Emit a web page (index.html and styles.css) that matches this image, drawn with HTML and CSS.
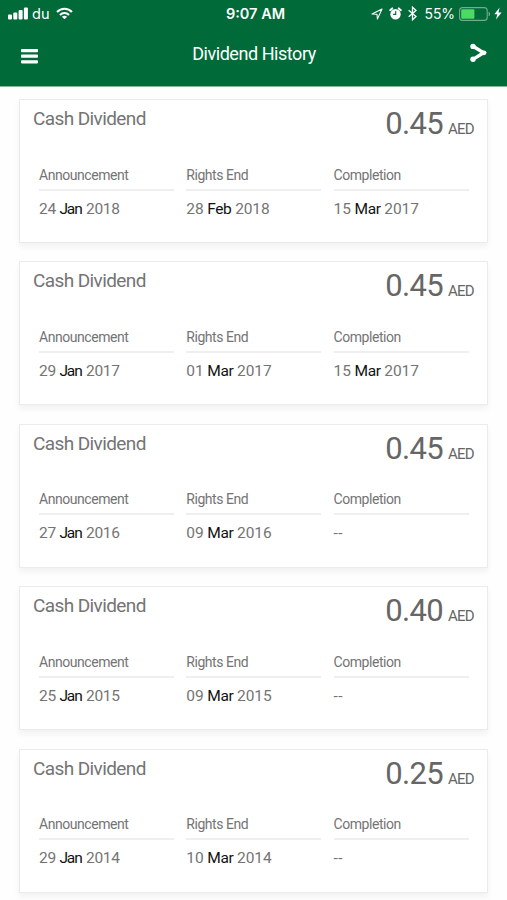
FILE: index.html
```
<!DOCTYPE html>
<html lang="en">
<head>
    <meta charset="UTF-8">
    <title>Dividend History</title>
    <link rel="stylesheet" href="styles.css">
</head>
<body>
<header class="header">
    <div class="status">
        <div class="status-left">
            <svg class="signal" width="20" height="13" viewBox="0 0 20 13" fill="#fff">
                <rect x="0" y="7.5" width="4" height="5" rx="1"/>
                <rect x="5.3" y="5.5" width="4" height="7" rx="1"/>
                <rect x="10.6" y="3" width="4" height="9.5" rx="1"/>
                <rect x="15.9" y="0.5" width="4" height="12" rx="1"/>
            </svg>
            <span class="carrier">du</span>
            <svg class="wifi" width="17" height="13" viewBox="0 0 18 13" fill="none" stroke="#fff" stroke-width="2.2">
                <path d="M1.1 5C5.4 .4 12.6 .4 16.9 5"/>
                <path d="M4.2 8c2.7-2.8 6.9-2.8 9.6 0"/>
                <path d="M9 12.7 6.2 9.9c1.6-1.5 4-1.5 5.6 0z" fill="#fff" stroke="none"/>
            </svg>
        </div>
        <div class="time">9:07 AM</div>
        <div class="status-right">
            <svg class="location" width="12" height="12" viewBox="0 0 12 12" fill="none" stroke="#fff" stroke-width="1.1" stroke-linejoin="round">
                <path d="M11 1 1 6l5 .2.4 4.8z"/>
            </svg>
            <svg class="alarm" width="13" height="13" viewBox="0 0 13 13">
                <circle cx="6.5" cy="7.2" r="5.2" fill="#fff"/>
                <path d="M1.2 3.2 3.2 1.4M11.8 3.2 9.8 1.4" stroke="#fff" stroke-width="2" stroke-linecap="round"/>
                <path d="M6.7 4v3.4H4.2" fill="none" stroke="#006a38" stroke-width="1.1"/>
            </svg>
            <svg class="bluetooth" width="9" height="15" viewBox="0 0 9 15" fill="none" stroke="#fff" stroke-width="1.3">
                <path d="M.7 4.2 8 10.6 4.5 13.8V1.2L8 4.4.7 10.8"/>
            </svg>
            <span class="percent">55%</span>
            <svg class="battery" width="32" height="14" viewBox="0 0 32 14">
                <rect x=".6" y=".6" width="27.6" height="12.8" rx="3" fill="none" stroke="#77aa8e" stroke-width="1.1"/>
                <rect x="2.2" y="2.2" width="13.2" height="9.6" rx="1" fill="#4cd964"/>
                <path d="M29.6 4.7c2 .7 2 3.9 0 4.6z" fill="#77aa8e"/>
            </svg>
            <svg class="bolt" width="8" height="13" viewBox="0 0 8 13" fill="#fff">
                <path d="M5.6.4.3 7.2h3L2 12.6l5.6-7.2H4.5z"/>
            </svg>
        </div>
    </div>
    <div class="nav">
        <svg class="menu" width="17" height="15" viewBox="0 0 17 15" fill="#fff">
            <rect x="0" y="0" width="17" height="3.2" rx=".8"/>
            <rect x="0" y="5.6" width="17" height="3.2" rx=".8"/>
            <rect x="0" y="11.2" width="17" height="3.2" rx=".8"/>
        </svg>
        <h1 class="title">Dividend History</h1>
        <svg class="share" width="17" height="20" viewBox="0 0 17 20" fill="#fff">
            <path d="M3 3.2 13.6 9.8 3 16.4" fill="none" stroke="#fff" stroke-width="3.4"/>
            <circle cx="3" cy="3.4" r="2.7"/>
            <circle cx="14" cy="9.8" r="2.4"/>
            <circle cx="3" cy="16.2" r="2.7"/>
        </svg>
    </div>
</header>
<main class="list">
    <section class="card">
        <div class="card-top">
            <h2 class="name">Cash Dividend</h2>
            <div class="amount">0.45<span class="currency">AED</span></div>
        </div>
        <div class="dates">
            <div class="col"><div class="label">Announcement</div><div class="date">24 <b>Jan</b> 2018</div></div>
            <div class="col"><div class="label">Rights End</div><div class="date">28 <b>Feb</b> 2018</div></div>
            <div class="col"><div class="label">Completion</div><div class="date">15 <b>Mar</b> 2017</div></div>
        </div>
    </section>
    <section class="card">
        <div class="card-top">
            <h2 class="name">Cash Dividend</h2>
            <div class="amount">0.45<span class="currency">AED</span></div>
        </div>
        <div class="dates">
            <div class="col"><div class="label">Announcement</div><div class="date">29 <b>Jan</b> 2017</div></div>
            <div class="col"><div class="label">Rights End</div><div class="date">01 <b>Mar</b> 2017</div></div>
            <div class="col"><div class="label">Completion</div><div class="date">15 <b>Mar</b> 2017</div></div>
        </div>
    </section>
    <section class="card">
        <div class="card-top">
            <h2 class="name">Cash Dividend</h2>
            <div class="amount">0.45<span class="currency">AED</span></div>
        </div>
        <div class="dates">
            <div class="col"><div class="label">Announcement</div><div class="date">27 <b>Jan</b> 2016</div></div>
            <div class="col"><div class="label">Rights End</div><div class="date">09 <b>Mar</b> 2016</div></div>
            <div class="col"><div class="label">Completion</div><div class="date none">--</div></div>
        </div>
    </section>
    <section class="card">
        <div class="card-top">
            <h2 class="name">Cash Dividend</h2>
            <div class="amount">0.40<span class="currency">AED</span></div>
        </div>
        <div class="dates">
            <div class="col"><div class="label">Announcement</div><div class="date">25 <b>Jan</b> 2015</div></div>
            <div class="col"><div class="label">Rights End</div><div class="date">09 <b>Mar</b> 2015</div></div>
            <div class="col"><div class="label">Completion</div><div class="date none">--</div></div>
        </div>
    </section>
    <section class="card">
        <div class="card-top">
            <h2 class="name">Cash Dividend</h2>
            <div class="amount">0.25<span class="currency">AED</span></div>
        </div>
        <div class="dates">
            <div class="col"><div class="label">Announcement</div><div class="date">29 <b>Jan</b> 2014</div></div>
            <div class="col"><div class="label">Rights End</div><div class="date">10 <b>Mar</b> 2014</div></div>
            <div class="col"><div class="label">Completion</div><div class="date none">--</div></div>
        </div>
    </section>
</main>
</body>
</html>
```

FILE: styles.css
```
* {
    margin: 0;
    padding: 0;
    box-sizing: border-box;
}

body {
    height: 900px;
    overflow: hidden;
    background-color: #fefefe;
    font-family: Roboto, "Noto Sans", sans-serif;
    color: #747474;
}
svg {
    display: block;
    flex: none;
}
.header {
    height: 87px;
    background-color: #006a38;
    border-bottom: 1px solid #86b99c;
    color: #fff;
}

/* status bar */
.status {
    display: grid;
    grid-template-columns: 1fr auto 1fr;
    align-items: center;
    height: 27px;
    padding: 0 5px 0 8px;
    font-family: Inter, sans-serif;
}
.status-left,
.status-right {
    display: flex;
    align-items: center;
}
.status-right {
    justify-content: flex-end;
}
.carrier {
    margin: 0 7px 0 4px;
    font-size: 14.5px;
    line-height: 27px;
    font-weight: 400;
}
.time {
    padding-left: 1px;
    font-size: 14.5px;
    font-weight: 600;
    line-height: 27px;
}
.alarm {
    margin-left: 6px;
}
.bluetooth {
    margin-left: 6px;
}
.percent {
    margin: 0 4px 0 8px;
    font-size: 14px;
    line-height: 27px;
    letter-spacing: -0.1px;
}
.bolt {
    margin-left: 3px;
}

/* title bar */
.nav {
    display: flex;
    align-items: center;
    justify-content: space-between;
    height: 54px;
    padding: 0 20px 0 21px;
}
.menu {
    margin-top: 4px;
}
.share {
    margin-bottom: 3px;
}
.title {
    font-size: 18px;
    font-weight: 400;
    line-height: 54px;
    letter-spacing: -0.45px;
}

/* dividend cards */
.list {
    display: flex;
    flex-direction: column;
    gap: 18.4px;
    padding: 12px 19px 0;
}
.card {
    flex: none;
    height: 144px;
    border: 1px solid #ebebeb;
    background-color: #fff;
    box-shadow: 0 4px 6px rgba(0, 0, 0, 0.05);
}
.card-top {
    display: flex;
    justify-content: space-between;
    height: 63.5px;
    padding: 0 13px;
}
.name {
    font-size: 19px;
    font-weight: 400;
    line-height: 38.5px;
    letter-spacing: -0.6px;
}
.amount {
    font-size: 31px;
    line-height: 48px;
    letter-spacing: -0.7px;
    color: #666;
}
.currency {
    margin-left: 5px;
    font-size: 15px;
}
.dates {
    display: grid;
    grid-template-columns: repeat(3, 135px);
    column-gap: 12.3px;
    padding-left: 19px;
}
.label {
    height: 27px;
    border-bottom: 2px solid #efefef;
    font-size: 14px;
    line-height: 23px;
    letter-spacing: -0.45px;
}
.date {
    font-size: 15.5px;
    line-height: 36px;
    letter-spacing: -0.1px;
}
.date b {
    font-weight: 400;
    letter-spacing: -0.4px;
    color: #111;
}
.col:first-child .date {
    letter-spacing: -0.3px;
}
.col:first-child b {
    margin-right: 0.8px;
    letter-spacing: -1.1px;
}
.none {
    letter-spacing: 0.4px;
}
```
